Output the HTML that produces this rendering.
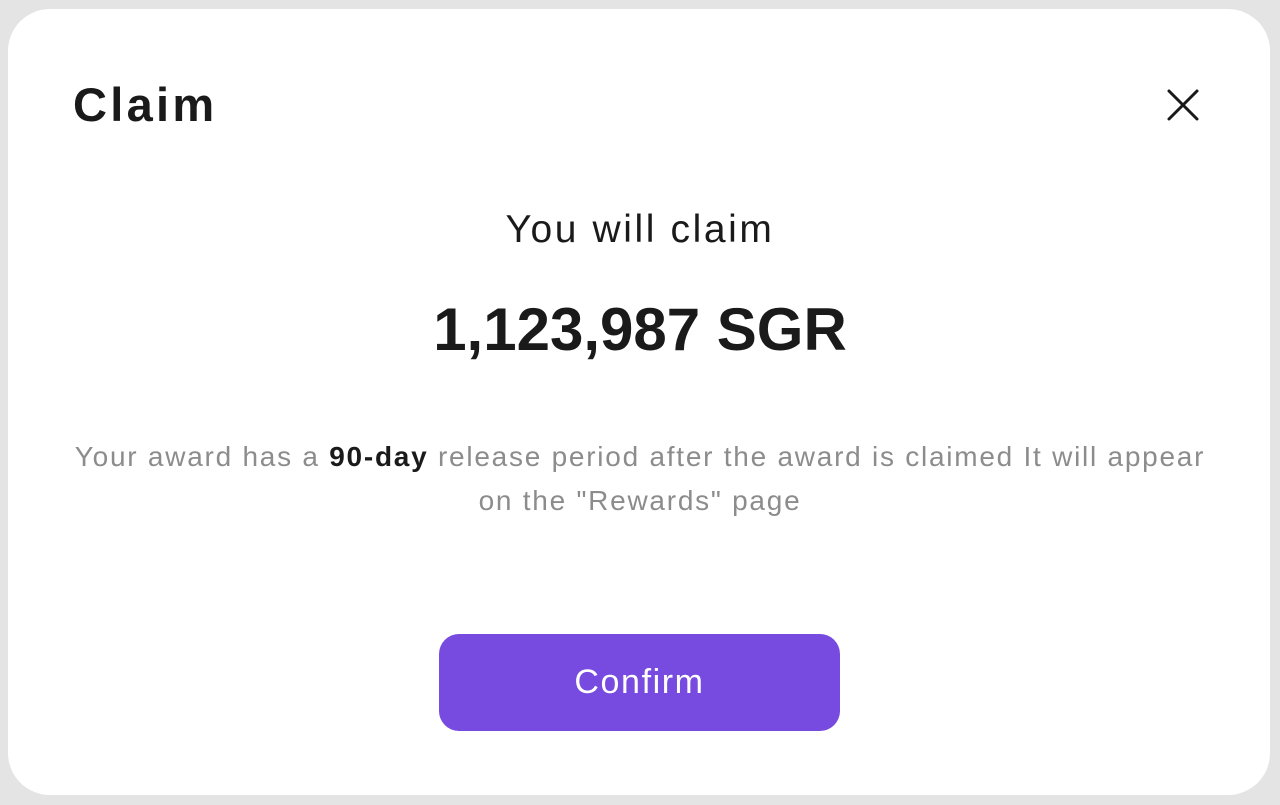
<!DOCTYPE html>
<html><head><style>
html,body{margin:0;padding:0;}
body{width:1280px;height:805px;background:#e4e4e4;position:relative;overflow:hidden;font-family:"Liberation Sans",sans-serif;}
.card{position:absolute;left:8px;top:9px;width:1262px;height:786px;background:#fff;border-radius:42px;}
.title{position:absolute;left:73px;top:77px;font-size:47px;font-weight:bold;color:#1a1a1a;letter-spacing:3.3px;line-height:56px;}
.x{position:absolute;left:1166px;top:88px;}
.t1{position:absolute;left:0;width:1280px;top:206px;text-align:center;font-size:39px;color:#1a1a1a;line-height:48px;letter-spacing:2.6px;}
.t2{position:absolute;left:0;width:1280px;top:292px;text-align:center;font-size:60px;font-weight:bold;color:#1a1a1a;line-height:76px;}
.p{position:absolute;left:0;width:1280px;top:435px;text-align:center;font-size:28px;color:#8c8c8c;line-height:44px;letter-spacing:1.75px;}
.p b{color:#1a1a1a;}
.btn{position:absolute;left:439px;top:634px;width:401px;height:97px;background:#774ae0;border-radius:20px;color:#fff;font-size:34px;text-align:center;line-height:97px;letter-spacing:1.6px;}
</style></head><body>
<div class="card"></div>
<div class="title">Claim</div>
<svg class="x" width="34" height="34" viewBox="0 0 34 34"><path d="M3 3L31 31M31 3L3 31" stroke="#1a1a1a" stroke-width="3" stroke-linecap="round"/></svg>
<div class="t1">You will claim</div>
<div class="t2">1,123,987 SGR</div>
<div class="p">Your award has a <b>90-day</b> release period after the award is claimed It will appear<br>on the "Rewards" page</div>
<div class="btn">Confirm</div>
</body></html>
